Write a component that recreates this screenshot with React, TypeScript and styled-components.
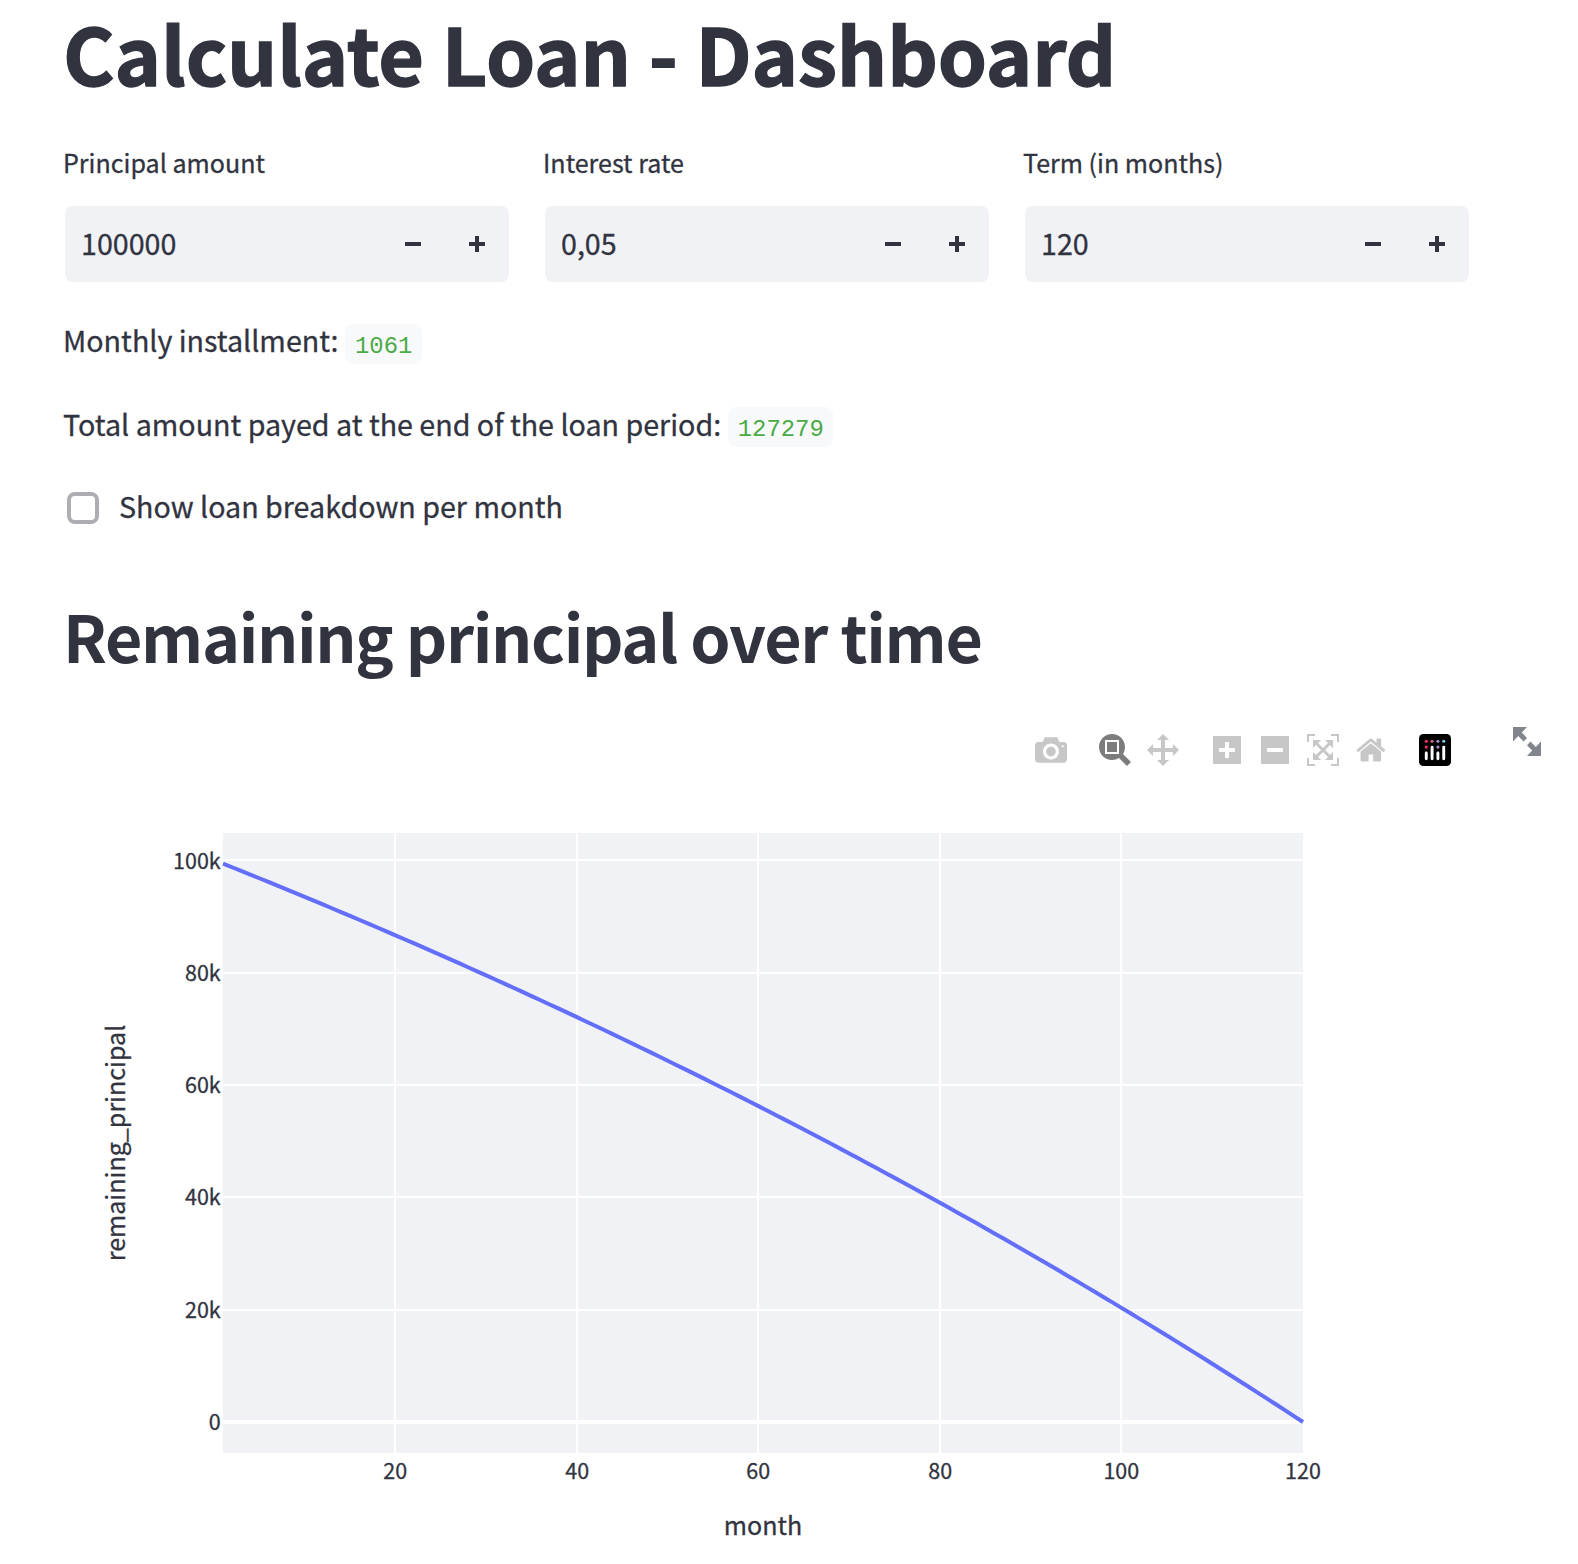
import React from "react";
import styled, { createGlobalStyle } from "styled-components";

const ink = "#31333f";
const sans = `"Noto Sans CJK SC", "Noto Sans", sans-serif`;

const GlobalStyle = createGlobalStyle`
  * { box-sizing: border-box; }
  body {
    margin: 0;
    background: #fff;
    color: ${ink};
    font-family: ${sans};
    -webkit-text-stroke: 0.3px currentColor;
  }
`;

const Page = styled.main`
  width: 1578px;
  height: 1564px;
  padding-left: 63px;
  display: flex;
  flex-direction: column;
`;

const Title = styled.h1`
  margin: 0;
  height: 144px;
  font-size: 78.8px;
  line-height: 105px;
  font-weight: 700;
  white-space: nowrap;
  letter-spacing: -0.13px;
  -webkit-text-stroke: 1.3px currentColor;
`;

const Fields = styled.div`
  display: grid;
  grid-template-columns: repeat(3, 448px);
  column-gap: 32px;
`;

const Field = styled.div`
  display: flex;
  flex-direction: column;
`;

const Label = styled.label`
  height: 60px;
  font-size: 25.07px;
  line-height: 37px;
  white-space: nowrap;
`;

const InputBox = styled.div`
  display: flex;
  align-items: center;
  height: 80px;
  border: 2px solid transparent;
  background: #f0f2f6;
  background-clip: padding-box;
  border-radius: 10px;
`;

const Value = styled.input`
  flex: 1;
  min-width: 0;
  height: 76px;
  padding: 0 16px 4px;
  border: 0;
  outline: 0;
  background: transparent;
  color: ${ink};
  font: 28.65px ${sans};
`;

const Step = styled.button`
  width: 64px;
  height: 76px;
  padding: 0;
  border: 0;
  background: transparent;
  display: flex;
  align-items: center;
  justify-content: center;
`;

const Paragraph = styled.p<{ $gap: number }>`
  margin: ${(p) => p.$gap}px 0 0;
  height: 48px;
  display: flex;
  align-items: center;
  gap: 7px;
  font-size: 28.65px;
  white-space: nowrap;
`;

const Sentence = styled.span<{ $line: number }>`
  height: 48px;
  line-height: ${(p) => p.$line}px;
`;

const Code = styled.code`
  height: 40px;
  padding: 0 9.6px;
  border-radius: 8px;
  background: #f8f9fb;
  color: #4aab45;
  font: 23.9px/46px "Liberation Mono", monospace;
  -webkit-text-stroke: 0;
`;

const CheckRow = styled.label`
  margin-top: 33px;
  padding-left: 4px;
  height: 48px;
  display: flex;
  align-items: center;
  gap: 20px;
  font-size: 28.65px;
  white-space: nowrap;
`;

const CheckBox = styled.span`
  width: 32px;
  height: 32px;
  border: 4px solid #adadb2;
  border-radius: 8px;
`;

const Heading = styled.h2`
  margin: 60px 0 0;
  height: 135px;
  font-size: 64.5px;
  line-height: 86px;
  font-weight: 700;
  white-space: nowrap;
  letter-spacing: -1.33px;
  -webkit-text-stroke: 0;
`;

const Toolbar = styled.div`
  height: 53px;
  padding-left: 972px;
  display: flex;
  align-items: flex-start;
`;

const Tools = styled.div`
  display: flex;
  align-items: center;
  gap: 32px;
  padding-top: 7px;
`;

const ToolGroup = styled.div`
  display: flex;
  gap: 16px;
`;

const ToolSlot = styled.span<{ $color?: string }>`
  width: 32px;
  height: 32px;
  display: flex;
  align-items: center;
  justify-content: center;
  color: ${(p) => p.$color ?? "#c7c7c7"};
`;

const FullscreenSlot = styled.span`
  margin-left: 62px;
  display: flex;
  color: #83858c;
`;

const ChartSvg = styled.svg`
  display: block;
  flex: none;
  margin-left: -63px;
  font-family: ${sans};
  fill: ${ink};

  text {
    stroke: ${ink};
    stroke-width: 0.3px;
  }
`;

const icons = {
  camera:
    "m500 450c-83 0-150-67-150-150 0-83 67-150 150-150 83 0 150 67 150 150 0 83-67 150-150 150z m400 150h-120c-16 0-34 13-39 29l-31 93c-6 15-23 28-40 28h-340c-16 0-34-13-39-28l-31-94c-6-15-23-28-40-28h-120c-55 0-100-45-100-100v-450c0-55 45-100 100-100h800c55 0 100 45 100 100v450c0 55-45 100-100 100z m-400-550c-138 0-250 112-250 250 0 138 112 250 250 250 138 0 250-112 250-250 0-138-112-250-250-250z m365 380c-19 0-35 16-35 35 0 19 16 35 35 35 19 0 35-16 35-35 0-19-16-35-35-35z",
  zoom: "m1000-25l-250 251c40 63 63 138 63 218 0 224-182 406-407 406-224 0-406-182-406-406s183-406 407-406c80 0 155 22 218 62l250-250 125 125z m-812 250l0 438 437 0 0-438-437 0z m62 375l313 0 0-312-313 0 0 312z",
  pan: "m1000 350l-187 188 0-125-250 0 0 250 125 0-188 187-187-187 125 0 0-250-250 0 0 125-188-188 186-187 0 125 252 0 0-250-125 0 187-188 188 188-125 0 0 250 250 0 0-126 187 188z",
  plus: "m1 787l0-875 875 0 0 875-875 0z m687-500l-187 0 0-187-125 0 0 187-188 0 0 125 188 0 0 187 125 0 0-187 187 0 0-125z",
  minus: "m0 788l0-876 875 0 0 876-875 0z m688-500l-500 0 0 125 500 0 0-125z",
  autoscale:
    "m250 850l-187 0-63 0 0-62 0-188 63 0 0 188 187 0 0 62z m688 0l-188 0 0-62 188 0 0-188 62 0 0 188 0 62-62 0z m-875-938l0 188-63 0 0-188 0-62 63 0 187 0 0 62-187 0z m875 188l0-188-188 0 0-62 188 0 62 0 0 62 0 188-62 0z m-125 188l-1 0-93-94-156 156 156 156 92-93 2 0 0 250-250 0 0-2 93-92-156-156-156 156 94 92 0 2-250 0 0-250 0 0 93 93 157-156-157-156-93 94 0 0 0-250 250 0 0 0-94 93 156 157 156-157-93-93 0 0 250 0 0 250z",
  home: "m786 296v-267q0-15-11-26t-25-10h-214v214h-143v-214h-214q-15 0-25 10t-11 26v267q0 1 0 2t0 2l321 264 321-264q1-1 1-4z m124 39l-34-41q-5-5-12-6h-2q-7 0-12 3l-386 322-386-322q-7-4-13-4-7 2-12 7l-35 41q-4 5-3 13t6 12l401 334q18 15 42 15t43-15l136-114v109q0 8 5 13t13 5h107q8 0 13-5t5-13v-227l122-102q5-5 6-12t-4-13z",
};

function Tool({ d, width = 1000, color }: { d: string; width?: number; color?: string }) {
  return (
    <ToolSlot $color={color}>
      <svg width={(width * 32) / 1000} height="32" viewBox={`0 0 ${width} 1000`} fill="currentColor">
        <path transform="matrix(1 0 0 -1 0 850)" d={d} />
      </svg>
    </ToolSlot>
  );
}

function PlotlyLogo() {
  return (
    <ToolSlot>
      <svg width="32" height="32" viewBox="0 0 132 132">
        <rect width="132" height="132" rx="18" />
        <circle cx="30" cy="30" r="6.5" fill="#ff2c62" />
        <circle cx="54" cy="30" r="6.5" fill="#d9608f" />
        <circle cx="78" cy="30" r="6.5" fill="#a98ac4" />
        <circle cx="102" cy="30" r="6.5" fill="#7fcbe6" />
        <circle cx="30" cy="54" r="6.5" fill="#ff2c62" />
        <circle cx="78" cy="54" r="6.5" fill="#a98ac4" />
        <g fill="#fff">
          <rect x="24" y="72" width="12" height="36" rx="6" />
          <rect x="48" y="48" width="12" height="60" rx="6" />
          <rect x="72" y="72" width="12" height="36" rx="6" />
          <rect x="96" y="48" width="12" height="60" rx="6" />
        </g>
      </svg>
    </ToolSlot>
  );
}

function NumberField({ label, value }: { label: string; value: string }) {
  return (
    <Field>
      <Label>{label}</Label>
      <InputBox>
        <Value defaultValue={value} aria-label={label} />
        <Step aria-label="decrease">
          <svg width="16" height="16" viewBox="0 0 16 16" fill={ink}>
            <path d="M0 6h16v4H0z" />
          </svg>
        </Step>
        <Step aria-label="increase">
          <svg width="16" height="16" viewBox="0 0 16 16" fill={ink}>
            <path d="M0 6h6V0h4v6h6v4h-6v6H6v-6H0z" />
          </svg>
        </Step>
      </InputBox>
    </Field>
  );
}

const TOP = 780;
const months = 120;
const rate = 0.05 / 12;
const payment = (100000 * rate) / (1 - Math.pow(1 + rate, -months));
const xAt = (m: number) => 223 + ((m - 1) * 1080) / 119;
const yAt = (v: number) => 1422 - TOP - (v / 100000) * 562;

const points: string[] = [];
let remaining = 100000;
for (let m = 1; m <= months; m++) {
  remaining = remaining * (1 + rate) - payment;
  points.push(`${xAt(m).toFixed(2)},${yAt(remaining).toFixed(2)}`);
}

const xTicks = [
  { label: "20", x: 395 },
  { label: "40", x: 577 },
  { label: "60", x: 758 },
  { label: "80", x: 940 },
  { label: "100", x: 1121 },
];
const yTicks = [
  { label: "100k", y: 860 },
  { label: "80k", y: 973 },
  { label: "60k", y: 1085 },
  { label: "40k", y: 1197 },
  { label: "20k", y: 1310 },
  { label: "0", y: 1422 },
];

function Chart() {
  return (
    <ChartSvg width="1578" height="784" viewBox="0 0 1578 784">
      <rect x="223" y={833 - TOP} width="1080" height="620" fill="#f0f2f6" />
      <g fill="#fff">
        {xTicks.map((t) => (
          <rect key={t.label} x={t.x - 1} y={833 - TOP} width="2" height="620" />
        ))}
        {yTicks.map((t) => {
          const h = t.label === "0" ? 4 : 2;
          return <rect key={t.label} x="223" y={t.y - TOP - h / 2} width="1080" height={h} />;
        })}
      </g>
      <polyline points={points.join(" ")} fill="none" stroke="#636efa" strokeWidth="4" />
      <g fontSize="21.49" textAnchor="middle">
        {xTicks.map((t) => (
          <text key={t.label} x={t.x + 0.3} y={1479 - TOP}>{t.label}</text>
        ))}
        <text x="1303" y={1479 - TOP}>120</text>
      </g>
      <g fontSize="21.49" textAnchor="end">
        {yTicks.map((t) => (
          <text key={t.label} x="220.7" y={t.y - TOP + (t.label === "100k" ? 9 : 8)}>{t.label}</text>
        ))}
      </g>
      <g fontSize="25.07" textAnchor="middle">
        <text x="763" y={1535 - TOP}>month</text>
        <text transform={`translate(125 ${1143 - TOP}) rotate(-90)`}>remaining_principal</text>
      </g>
    </ChartSvg>
  );
}

export default function App() {
  return (
    <Page>
      <GlobalStyle />
      <Title>Calculate Loan - Dashboard</Title>
      <Fields>
        <NumberField label="Principal amount" value="100000" />
        <NumberField label="Interest rate" value="0,05" />
        <NumberField label="Term (in months)" value="120" />
      </Fields>
      <Paragraph $gap={36}>
        <Sentence $line={40}>Monthly installment:</Sentence>
        <Code>1061</Code>
      </Paragraph>
      <Paragraph $gap={35}>
        <Sentence $line={42}>Total amount payed at the end of the loan period:</Sentence>
        <Code>127279</Code>
      </Paragraph>
      <CheckRow>
        <CheckBox />
        <Sentence $line={44}>Show loan breakdown per month</Sentence>
      </CheckRow>
      <Heading>Remaining principal over time</Heading>
      <Toolbar>
        <Tools>
          <ToolGroup>
            <Tool d={icons.camera} />
          </ToolGroup>
          <ToolGroup>
            <Tool d={icons.zoom} color="#7c7c7c" />
            <Tool d={icons.pan} />
          </ToolGroup>
          <ToolGroup>
            <Tool d={icons.plus} width={875} />
            <Tool d={icons.minus} width={875} />
            <Tool d={icons.autoscale} />
            <Tool d={icons.home} width={928.6} />
          </ToolGroup>
          <ToolGroup>
            <PlotlyLogo />
          </ToolGroup>
        </Tools>
        <FullscreenSlot>
          <svg width="28" height="29" viewBox="0 0 8 8" preserveAspectRatio="none" fill="currentColor">
            <path d="M0 0v4l1.5-1.5 1.5 1.5 1-1-1.5-1.5 1.5-1.5h-4zm5 4l-1 1 1.5 1.5-1.5 1.5h4v-4l-1.5 1.5-1.5-1.5z" />
          </svg>
        </FullscreenSlot>
      </Toolbar>
      <Chart />
    </Page>
  );
}
